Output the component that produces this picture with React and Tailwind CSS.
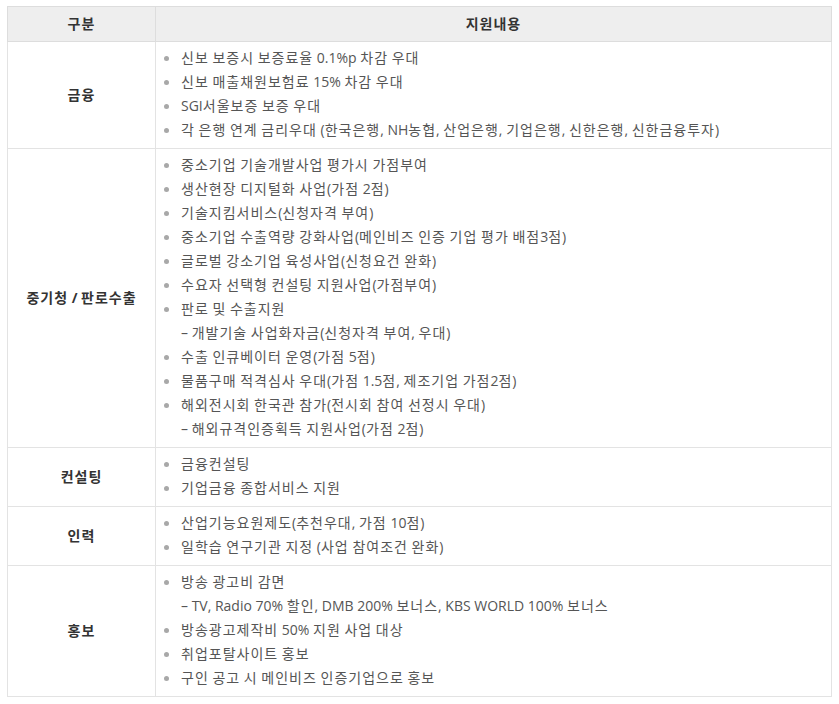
import React from "react";

const rows = [
  {
    label: "금융",
    items: [
      "신보 보증시 보증료율 0.1%p 차감 우대",
      "신보 매출채원보험료 15% 차감 우대",
      "SGI서울보증 보증 우대",
      "각 은행 연계 금리우대 (한국은행, NH농협, 산업은행, 기업은행, 신한은행, 신한금융투자)",
    ],
  },
  {
    label: "중기청 / 판로수출",
    items: [
      "중소기업 기술개발사업 평가시 가점부여",
      "생산현장 디지털화 사업(가점 2점)",
      "기술지킴서비스(신청자격 부여)",
      "중소기업 수출역량 강화사업(메인비즈 인증 기업 평가 배점3점)",
      "글로벌 강소기업 육성사업(신청요건 완화)",
      "수요자 선택형 컨설팅 지원사업(가점부여)",
      "판로 및 수출지원",
      { sub: "– 개발기술 사업화자금(신청자격 부여, 우대)" },
      "수출 인큐베이터 운영(가점 5점)",
      "물품구매 적격심사 우대(가점 1.5점, 제조기업 가점2점)",
      "해외전시회 한국관 참가(전시회 참여 선정시 우대)",
      { sub: "– 해외규격인증획득 지원사업(가점 2점)" },
    ],
  },
  {
    label: "컨설팅",
    items: ["금융컨설팅", "기업금융 종합서비스 지원"],
  },
  {
    label: "인력",
    items: ["산업기능요원제도(추천우대, 가점 10점)", "일학습 연구기관 지정 (사업 참여조건 완화)"],
  },
  {
    label: "홍보",
    items: [
      "방송 광고비 감면",
      { sub: "– TV, Radio 70% 할인, DMB 200% 보너스, KBS WORLD 100% 보너스" },
      "방송광고제작비 50% 지원 사업 대상",
      "취업포탈사이트 홍보",
      "구인 공고 시 메인비즈 인증기업으로 홍보",
    ],
  },
];

// hangul in the reference font runs a bit wider than Noto CJK, so space it out
const Ko = ({ text }) =>
  text.split(/([\uAC00-\uD7A3]+)/).map((part, i) =>
    /[\uAC00-\uD7A3]/.test(part) ? (
      <span key={i} className="tracking-[1px]">
        {part}
      </span>
    ) : (
      <React.Fragment key={i}>{part}</React.Fragment>
    )
  );

const Item = ({ item }) => {
  if (typeof item === "object") {
    return (
      <li className="pl-[25px] h-6">
        <Ko text={item.sub} />
      </li>
    );
  }
  return (
    <li className="flex items-center h-6">
      <span className="w-[5px] h-[5px] rounded-full bg-[#a8a8a8] ml-[8px] mr-[12px] shrink-0" />
      <span className="whitespace-nowrap">
        <Ko text={item} />
      </span>
    </li>
  );
};

export default function App() {
  return (
    <div
      className="bg-white pt-[6px] pl-[7px] w-[839px] h-[704px]"
      style={{ fontFamily: '"Open Sans", "Noto Sans CJK KR", sans-serif' }}
    >
      <table className="w-[825px] border-collapse text-[14px] leading-6 text-[#555]">
        <thead>
          <tr className="bg-[#eeeeee] h-[35px]">
            <th className="w-[148px] border border-[#dddddd] font-bold text-[#333] text-center">
              <Ko text="구분" />
            </th>
            <th className="border border-[#dddddd] font-bold text-[#333] text-center">
              <Ko text="지원내용" />
            </th>
          </tr>
        </thead>
        <tbody>
          {rows.map((row) => (
            <tr key={row.label}>
              <td className="border border-[#e3e3e3] font-bold text-[#333] text-center align-middle">
                <Ko text={row.label} />
              </td>
              <td className="border border-[#e3e3e3] pt-[4px] pb-[6px] align-top">
                <ul>
                  {row.items.map((it, i) => (
                    <Item key={i} item={it} />
                  ))}
                </ul>
              </td>
            </tr>
          ))}
        </tbody>
      </table>
    </div>
  );
}
